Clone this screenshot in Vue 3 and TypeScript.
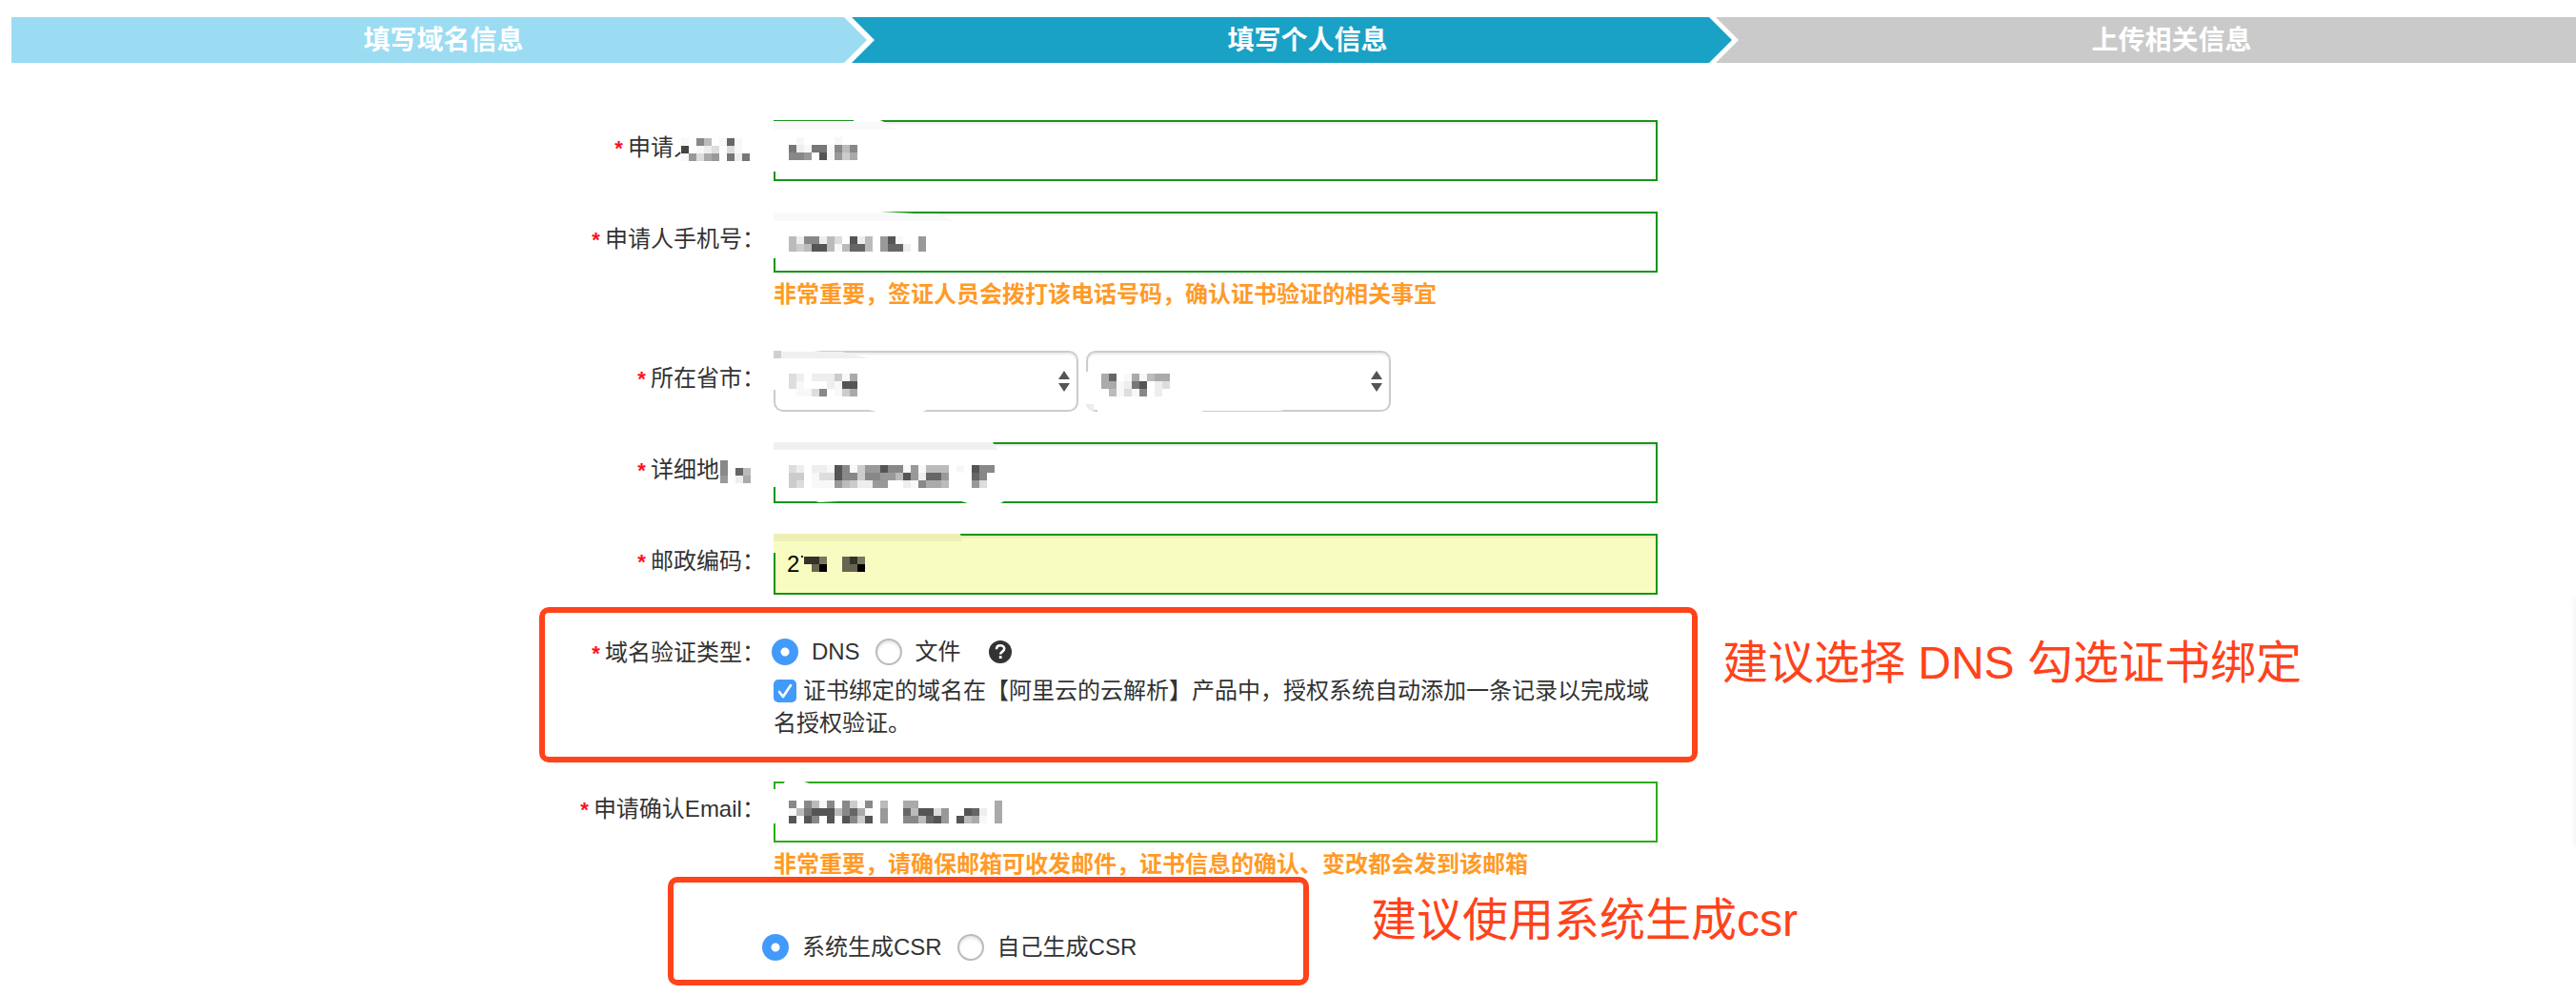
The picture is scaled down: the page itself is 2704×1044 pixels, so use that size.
<script setup lang="ts">
import { ref } from 'vue'

interface Patch { d: string; fill: string }
interface Cell { x: number; y: number; fill: string }
interface Redaction { patches: Patch[]; cells: Cell[] }

const CELL = 8

/** Expands rows of hex grey levels into square cells; "." leaves a cell empty. */
function cells(rows: string[], x: number, y: number, tint = 1): Cell[] {
  return rows.flatMap((row, r) =>
    [...row].flatMap((c, i) => {
      if (c === '.') return []
      const g = parseInt(c, 16) * 17
      const level = c === 'f' ? 248 : g
      return [{ x: x + i * CELL, y: y + r * CELL, fill: `rgb(${level},${level},${Math.round(level * tint)})` }]
    }),
  )
}

const steps = [
  { text: '填写域名信息', state: 'done' },
  { text: '填写个人信息', state: 'active' },
  { text: '上传相关信息', state: 'pending' },
]

const hidden: Record<string, Redaction> = {
  name: {
    patches: [
      { d: 'M0 1H84V0H112L118 3V54H0Z', fill: '#fff' },
      { d: 'M0 2H116L128 10H0Z', fill: '#f9f9f9' },
    ],
    cells: cells(['.f....f..', '7ef77f8b8', '889.5f9ca'], 16, 18),
  },
  phone: {
    patches: [
      { d: 'M0 0H112L148 2V8H10V49H0Z', fill: '#fff' },
      { d: 'M0 2H170L190 10H0Z', fill: '#f9f9f9' },
    ],
    cells: cells(['be88ebd.5eb.95f..9', 'bcb55bfb66b.966e.9'], 16, 26),
  },
  province: {
    patches: [
      { d: 'M0 0H42L76 4V8H6V41H0Z', fill: '#fff' },
      { d: 'M0 1H72L100 8H0Z', fill: '#f0f0f0' },
      { d: 'M0 0H8V8H0Z', fill: '#d0d0d0' },
      { d: 'M96 61L108 64H156L164 61Z', fill: '#fff' },
    ],
    cells: cells(['de.eeecfa', 'df...ef55', '.ffd8.fca'], 16, 24),
  },
  city: {
    patches: [
      { d: 'M0 22H6V56H0Z', fill: '#fff' },
      { d: 'M0 56H8V64L4 62Z', fill: '#ededed' },
      { d: 'M12 61V64H122V63H204L210 61Z', fill: '#fff' },
    ],
    cells: cells(['a6.fafbaa', 'aafe75.ed', '.bfdf8.e.'], 16, 24),
  },
  address: {
    patches: [
      { d: 'M0 0H230V8H6V47H0Z', fill: '#fff' },
      { d: 'M0 0H230L235 8H0Z', fill: '#f0f0f0' },
      { d: 'M40 61L48 63L88 61Z', fill: '#fff' },
      { d: 'M194 61L204 64H238L244 61Z', fill: '#fff' },
    ],
    cells: cells([
      'de.eef58fc99588f9fbbb.f.588',
      'cc.fdd588c8899b59e669...68.',
      'cd.fff9bcee99..ef8aab...9d.',
    ], 16, 24),
  },
  zip: {
    patches: [
      { d: 'M0 0H196V8H4V20H0Z', fill: '#f9fcc0' },
      { d: 'M0 0H196L198 8H0Z', fill: '#eeefb5' },
      { d: 'M29 23H31V25H29Z', fill: '#222' },
    ],
    cells: cells(['337..637', '.60..660'], 32, 24, 0.78),
  },
  email: {
    patches: [
      { d: 'M12 0H32L40 3H6V44H0V8H6Z', fill: '#fff' },
      { d: 'M112 61H256L200 62H140Z', fill: '#fff' },
    ],
    cells: cells([
      '8.8bf8.8cf8.b..aa..........a',
      'fb7555b86af.9..6b55d9..56e.a',
      '5.58.5.58c5.9..88b659.5baf.a',
    ], 16, 20),
  },
}

const hiddenNameLabel: Redaction = {
  patches: [{ d: 'M6 0H96V36H8V22L4 18Z', fill: '#fff' }],
  cells: cells(['f.8b.f6f.', '4.fed.df.', 'f9da9.7e7'], 8, 6),
}
const hiddenAddressLabel: Redaction = {
  patches: [{ d: 'M9 0H56V36H9Z', fill: '#fff' }],
  cells: cells(['8...', '8.6b', '9.ea'], 9, 6),
}

const name = ref('')
const phone = ref('')
const address = ref('')
const zip = ref('2')
const email = ref('')
const verify = ref('dns')
const csr = ref('system')
const bound = ref(true)
</script>

<template>
  <main class="page">
    <ol class="steps">
      <li v-for="s in steps" :key="s.text" class="step" :class="s.state"><span>{{ s.text }}</span></li>
    </ol>

    <form class="form" @submit.prevent>
      <div class="row">
        <label class="label" for="name"><i>*</i>申请人<svg class="label-mask wide" width="96" height="36"><path v-for="(p, i) in hiddenNameLabel.patches" :key="'p' + i" :d="p.d" :fill="p.fill" /><rect v-for="(c, i) in hiddenNameLabel.cells" :key="i" :x="c.x" :y="c.y" width="8" height="8" :fill="c.fill" /></svg></label>
        <div class="control">
          <div class="box">
            <input id="name" v-model="name" class="input" type="text" />
            <svg class="mask"><path v-for="(p, i) in hidden.name.patches" :key="'p' + i" :d="p.d" :fill="p.fill" /><rect v-for="(c, i) in hidden.name.cells" :key="i" :x="c.x" :y="c.y" width="8" height="8" :fill="c.fill" /></svg>
          </div>
        </div>
      </div>

      <div class="row">
        <label class="label" for="phone"><i>*</i>申请人手机号：</label>
        <div class="control">
          <div class="box">
            <input id="phone" v-model="phone" class="input" type="tel" />
            <svg class="mask"><path v-for="(p, i) in hidden.phone.patches" :key="'p' + i" :d="p.d" :fill="p.fill" /><rect v-for="(c, i) in hidden.phone.cells" :key="i" :x="c.x" :y="c.y" width="8" height="8" :fill="c.fill" /></svg>
          </div>
          <p class="hint">非常重要，签证人员会拨打该电话号码，确认证书验证的相关事宜</p>
        </div>
      </div>

      <div class="row">
        <label class="label" for="province"><i>*</i>所在省市：</label>
        <div class="control selects">
          <div v-for="k in ['province', 'city']" :key="k" class="box select-box">
            <select :id="k" class="select" :aria-label="k === 'city' ? '市' : '省'"></select>
            <svg class="arrows" width="12" height="22" viewBox="0 0 12 22"><path d="M6 0L12 9H0ZM0 13H12L6 22Z" fill="#555" /></svg>
            <svg class="mask"><path v-for="(p, i) in hidden[k].patches" :key="'p' + i" :d="p.d" :fill="p.fill" /><rect v-for="(c, i) in hidden[k].cells" :key="i" :x="c.x" :y="c.y" width="8" height="8" :fill="c.fill" /></svg>
          </div>
        </div>
      </div>

      <div class="row">
        <label class="label" for="address"><i>*</i>详细地<svg class="label-mask" width="56" height="36"><path v-for="(p, i) in hiddenAddressLabel.patches" :key="'p' + i" :d="p.d" :fill="p.fill" /><rect v-for="(c, i) in hiddenAddressLabel.cells" :key="i" :x="c.x" :y="c.y" width="8" height="8" :fill="c.fill" /></svg></label>
        <div class="control">
          <div class="box">
            <input id="address" v-model="address" class="input" type="text" />
            <svg class="mask"><path v-for="(p, i) in hidden.address.patches" :key="'p' + i" :d="p.d" :fill="p.fill" /><rect v-for="(c, i) in hidden.address.cells" :key="i" :x="c.x" :y="c.y" width="8" height="8" :fill="c.fill" /></svg>
          </div>
        </div>
      </div>

      <div class="row">
        <label class="label" for="zip"><i>*</i>邮政编码：</label>
        <div class="control">
          <div class="box">
            <input id="zip" v-model="zip" class="input filled" type="text" />
            <svg class="mask"><path v-for="(p, i) in hidden.zip.patches" :key="'p' + i" :d="p.d" :fill="p.fill" /><rect v-for="(c, i) in hidden.zip.cells" :key="i" :x="c.x" :y="c.y" width="8" height="8" :fill="c.fill" /></svg>
          </div>
        </div>
      </div>

      <div class="row">
        <span id="verify-label" class="label"><i>*</i>域名验证类型：</span>
        <div class="control verify">
          <div class="options" role="radiogroup" aria-labelledby="verify-label">
            <label class="option"><input v-model="verify" type="radio" name="verify" value="dns" />DNS</label>
            <label class="option"><input v-model="verify" type="radio" name="verify" value="file" />文件</label>
            <svg class="help" width="26" height="26" viewBox="0 0 26 26"><circle cx="13" cy="13" r="12" fill="#333" /><path d="M9 10.2C9 7.6 10.8 6.2 13.1 6.2S17.2 7.6 17.2 9.8C17.2 12.6 13.2 12.6 13.2 15.6" fill="none" stroke="#fff" stroke-width="2.6" /><rect x="11.8" y="17.2" width="2.8" height="2.8" fill="#fff" /></svg>
          </div>
          <label class="agree"><input v-model="bound" type="checkbox" />证书绑定的域名在【阿里云的云解析】产品中，授权系统自动添加一条记录以完成域名授权验证。</label>
          <div class="frame verify-frame"></div>
          <p class="note verify-note">建议选择 DNS 勾选证书绑定</p>
        </div>
      </div>

      <div class="row">
        <label class="label" for="email"><i>*</i>申请确认Email：</label>
        <div class="control">
          <div class="box">
            <input id="email" v-model="email" class="input light" type="email" />
            <svg class="mask"><path v-for="(p, i) in hidden.email.patches" :key="'p' + i" :d="p.d" :fill="p.fill" /><rect v-for="(c, i) in hidden.email.cells" :key="i" :x="c.x" :y="c.y" width="8" height="8" :fill="c.fill" /></svg>
          </div>
          <p class="hint">非常重要，请确保邮箱可收发邮件，证书信息的确认、变改都会发到该邮箱</p>
        </div>
      </div>

      <div class="row">
        <span></span>
        <div class="control csr">
          <div class="options" role="radiogroup" aria-label="CSR">
            <label class="option"><input v-model="csr" type="radio" name="csr" value="system" />系统生成CSR</label>
            <label class="option"><input v-model="csr" type="radio" name="csr" value="own" />自己生成CSR</label>
          </div>
          <div class="frame csr-frame"></div>
          <p class="note csr-note">建议使用系统生成csr</p>
        </div>
      </div>
    </form>

    <aside class="dock"></aside>
  </main>
</template>

<style>
body {
  margin: 0;
  background: #fff;
}
</style>

<style scoped>
.page {
  position: relative;
  box-sizing: border-box;
  min-height: 100vh;
  padding-top: 18px;
  overflow: hidden;
  color: #333;
  font-family: "Liberation Sans", "Noto Sans CJK SC", sans-serif;
  font-size: 24px;
  line-height: 34px;
}

p {
  margin: 0;
}

.steps {
  display: grid;
  grid-template-columns: repeat(3, 1fr);
  width: calc(100% + 17px);
  margin: 0 0 60px 12px;
  padding: 0;
  list-style: none;
}

.step {
  position: relative;
  height: 48px;
  color: #fff;
  font-size: 28px;
  font-weight: 700;
  line-height: 50px;
  text-align: center;
}

.step::before {
  content: "";
  position: absolute;
  inset: 0 8px 0 -25px;
  clip-path: polygon(0 0, calc(100% - 24px) 0, 100% 50%, calc(100% - 24px) 100%, 0 100%, 24px 50%);
}

.step span {
  position: relative;
}

.step.done::before {
  right: 9px;
  left: 0;
  background: #9bdcf3;
  clip-path: polygon(0 0, calc(100% - 24px) 0, 100% 50%, calc(100% - 24px) 100%, 0 100%);
}

.step.active::before {
  background: #19a1c6;
}

.step.pending::before {
  background: #cacaca;
  clip-path: polygon(0 0, 100% 0, 100% 100%, 0 100%, 24px 50%);
}

.form {
  display: flex;
  flex-direction: column;
  gap: 32px;
  padding-left: 1px;
}

.row {
  display: grid;
  grid-template-columns: 30% minmax(0, 928px) 1fr;
}

.label {
  height: 58px;
  padding-right: 9px;
  line-height: 58px;
  text-align: right;
  white-space: nowrap;
}

.label i {
  margin-right: 5px;
  color: #ff0e1e;
  font-size: 22px;
  font-style: normal;
  font-weight: 700;
}

.label-mask {
  margin-left: -8px;
  vertical-align: middle;
}

.label-mask.wide {
  margin-left: -24px;
}

.control {
  position: relative;
}

.box {
  position: relative;
  height: 64px;
}

.input,
.select {
  display: block;
  box-sizing: border-box;
  width: 100%;
  height: 64px;
  margin: 0;
  padding: 0 12px;
  border: 2px solid #17951a;
  border-radius: 0;
  outline: none;
  background: #fff;
  box-shadow: inset 0 2px 2px rgba(0, 0, 0, 0.08);
  color: #000;
  font: inherit;
}

.input.filled {
  background: #f9fcc0;
}

.input.light {
  border-color: #2daa1d;
  box-shadow: none;
}

.select {
  border-color: #ccc;
  border-radius: 10px;
  appearance: none;
}

.selects {
  display: flex;
  gap: 8px;
}

.select-box {
  flex: 0 1 320px;
}

.arrows {
  position: absolute;
  top: 21px;
  right: 9px;
  pointer-events: none;
}

.mask {
  position: absolute;
  inset: 0;
  width: 100%;
  height: 100%;
  pointer-events: none;
}

.hint {
  height: 34px;
  margin: 6px 0 10px;
  color: #ff9a27;
  font-weight: 700;
}

.verify {
  padding: 4px 0 12px;
}

.options {
  display: flex;
  align-items: center;
  height: 48px;
  margin-left: -2px;
}

.option {
  display: flex;
  align-items: center;
  gap: 14px;
  margin-right: 16px;
}

input[type="radio"],
input[type="checkbox"] {
  box-sizing: border-box;
  width: 28px;
  height: 28px;
  margin: 0;
  border: 2px solid #bbb;
  border-radius: 50%;
  background: #fff;
  box-shadow: inset 0 2px 3px rgba(0, 0, 0, 0.12);
  appearance: none;
}

input[type="radio"]:checked {
  border: 0;
  background: radial-gradient(circle, #fff 0 4px, #429bfa 5px);
  box-shadow: none;
}

input[type="checkbox"] {
  width: 24px;
  height: 24px;
  margin-right: 7px;
  border: 0;
  border-radius: 5px;
  background: #429bfa url("data:image/svg+xml,%3Csvg xmlns='http://www.w3.org/2000/svg' viewBox='0 0 24 24'%3E%3Cpath d='M6 13l4 5 8-12' fill='none' stroke='white' stroke-width='2.6' stroke-linecap='round' stroke-linejoin='round'/%3E%3C/svg%3E");
  box-shadow: none;
  vertical-align: -4px;
}

.help {
  margin-left: 12px;
}

.agree {
  display: block;
  height: 68px;
}

.csr .options {
  margin-left: -12px;
  padding-top: 4px;
}

.frame {
  position: absolute;
  box-sizing: border-box;
  border: 6px solid #ff431b;
  border-radius: 10px;
  pointer-events: none;
}

.verify-frame {
  inset: -19px -42px -12px -246px;
}

.csr-frame {
  top: -46px;
  left: -111px;
  width: 673px;
  height: 114px;
}

.note {
  position: absolute;
  color: #ff431b;
  font-size: 48px;
  line-height: 68px;
  white-space: nowrap;
}

.verify-note {
  top: 6px;
  left: 996px;
}

.csr-note {
  top: -34px;
  left: 627px;
}

.dock {
  position: absolute;
  top: 628px;
  right: -40px;
  width: 40px;
  height: 260px;
  box-shadow: 0 0 8px rgba(0, 0, 0, 0.08);
}
</style>
